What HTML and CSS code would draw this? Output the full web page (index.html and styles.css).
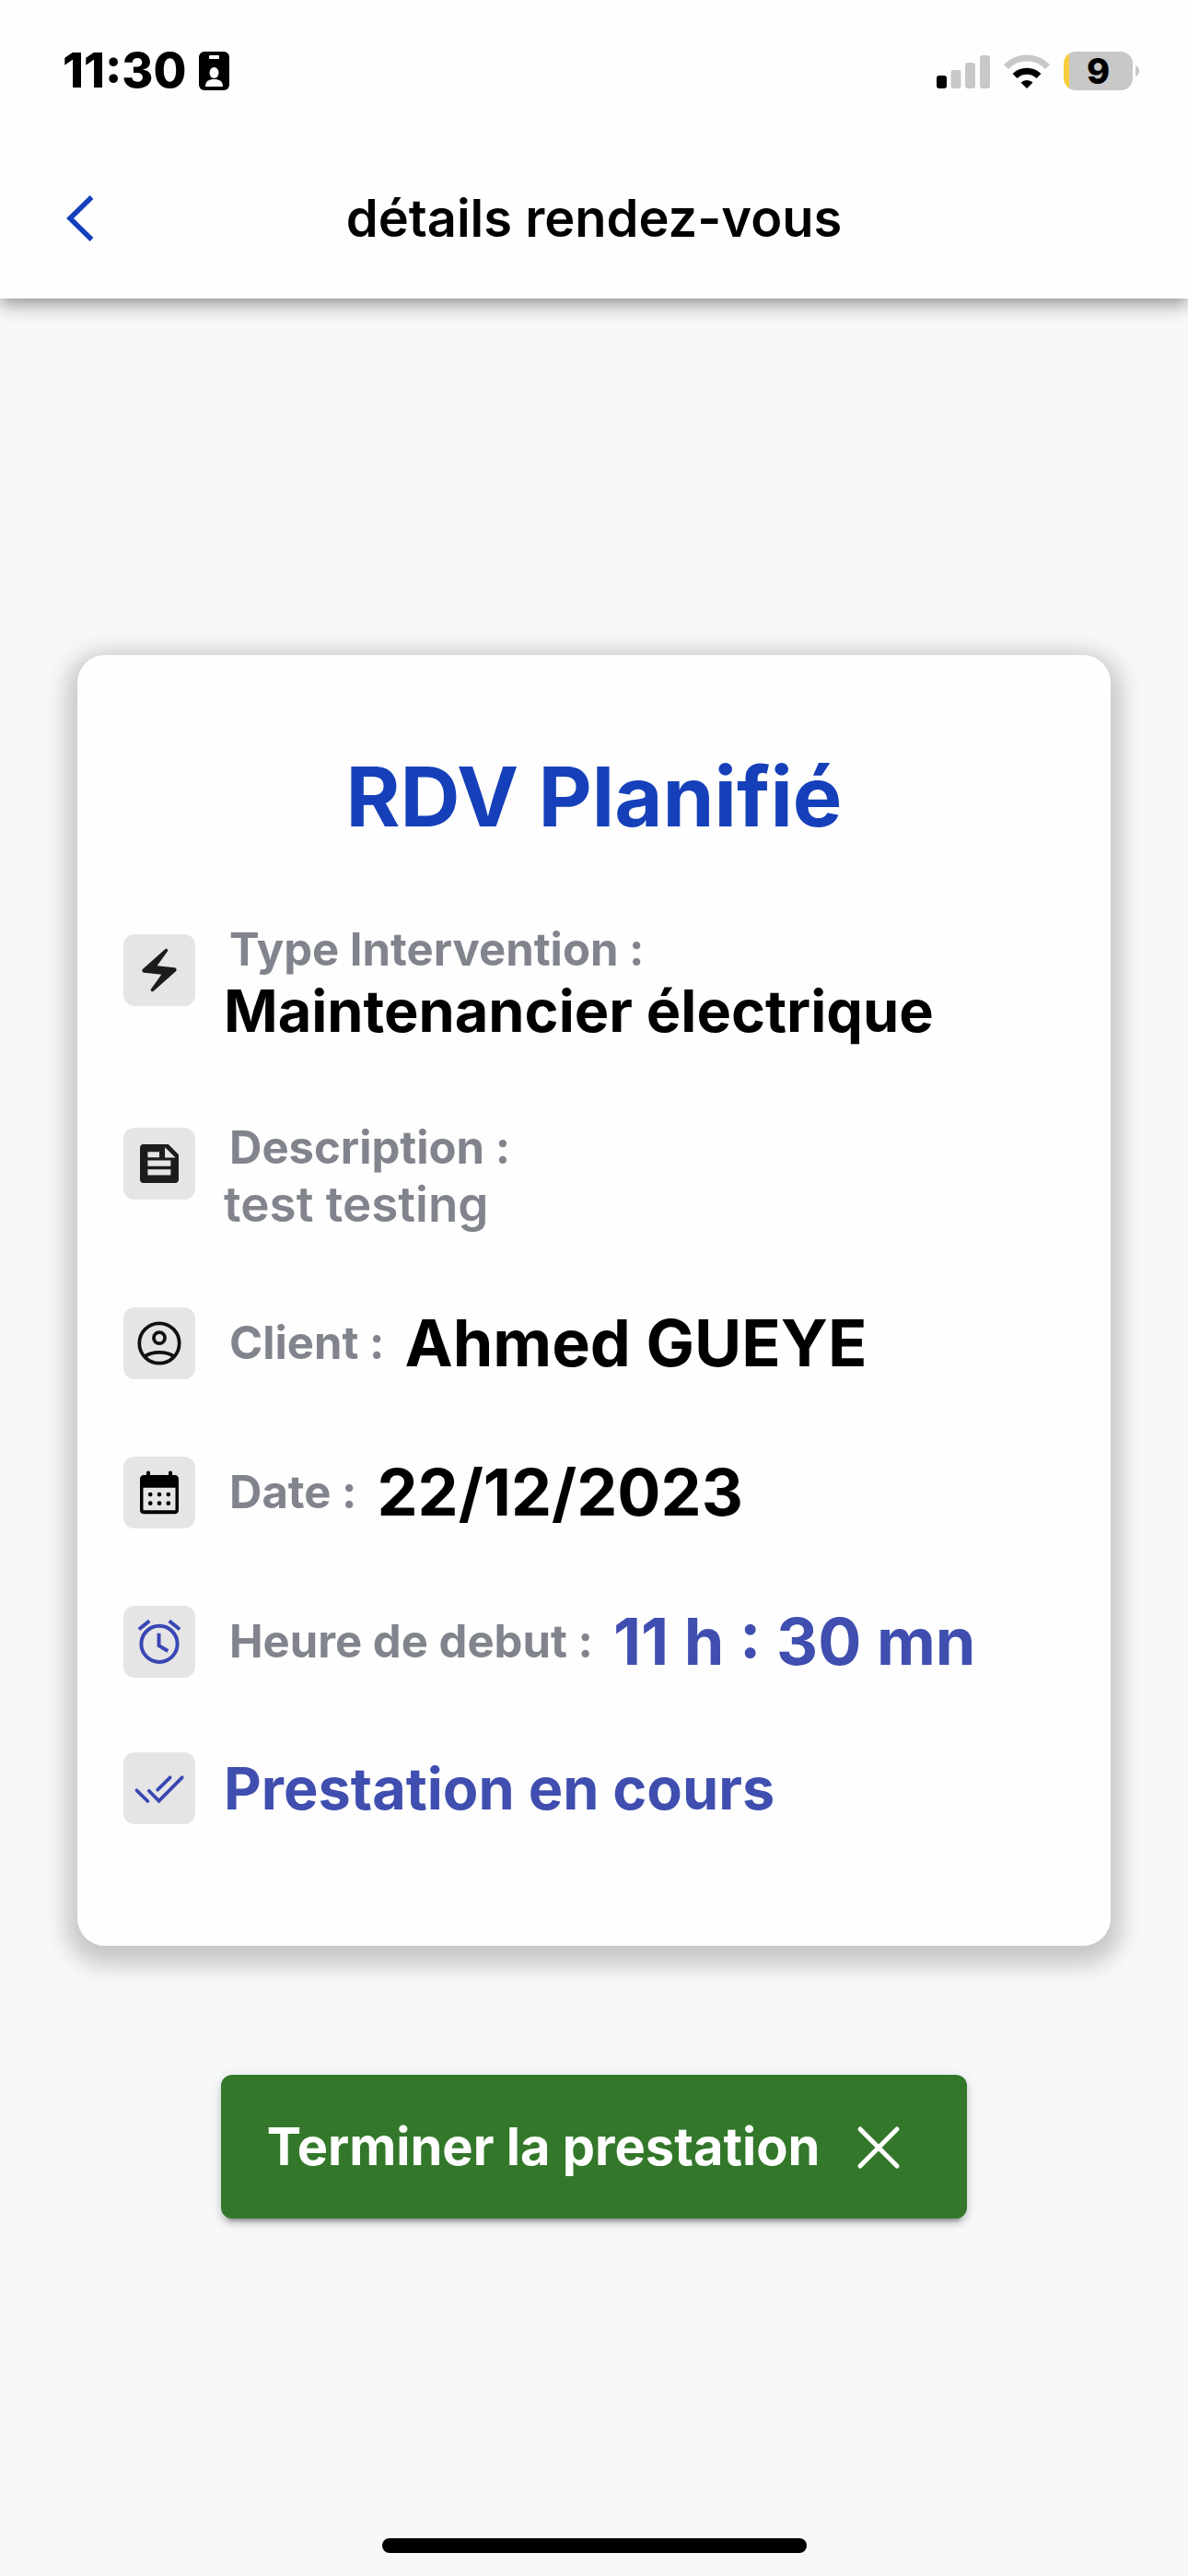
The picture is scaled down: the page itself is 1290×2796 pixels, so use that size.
FILE: index.html
```html
<!DOCTYPE html>
<html lang="fr">
<head>
<meta charset="utf-8">
<meta name="viewport" content="width=device-width, initial-scale=1">
<title>détails rendez-vous</title>
<link rel="stylesheet" href="styles.css">
</head>
<body>
<header class="app-bar">
  <div class="status">
    <div class="status-left">
      <span class="clock">11:30</span>
      <svg class="badge-icon" viewBox="0 0 33 42" aria-hidden="true">
        <rect width="33" height="42" rx="6"/>
        <rect x="11" y="4" width="11" height="4" rx="1" fill="#fff"/>
        <ellipse cx="16.500" cy="23" rx="5" ry="6" fill="#fff"/>
        <path d="M7 38c0-6 4-8 9.500-8s9.500 2 9.500 8z" fill="#fff"/>
      </svg>
    </div>
    <div class="status-right">
      <svg class="signal" viewBox="0 0 58 37" aria-hidden="true">
        <rect x="0" y="23" width="11" height="14" rx="3"/>
        <g fill="#c8c8c8"><rect x="15.500" y="17" width="11" height="20" rx="3"/><rect x="31" y="9" width="11" height="28" rx="3"/><rect x="47" y="1" width="11" height="36" rx="3"/></g>
      </svg>
      <svg class="wifi" viewBox="0 0 50 37" aria-hidden="true">
        <path d="M2.500 13.500A31.500 31.500 0 0 1 47.500 13.500" fill="none" stroke="#c8c8c8" stroke-width="7"/>
        <path d="M12 23.500A18.500 18.500 0 0 1 38 23.500" fill="none" stroke="#000" stroke-width="7"/>
        <path d="M18.500 30.500a9.500 9.500 0 0 1 13 0L25 37z"/>
      </svg>
      <span class="battery">9</span>
      <svg class="battery-cap" viewBox="0 0 5 12" aria-hidden="true"><path d="M0 0a6.500 6.500 0 0 1 0 12z" fill="#c8c8c8"/></svg>
    </div>
  </div>
  <div class="toolbar">
    <button class="back" type="button" aria-label="Retour">
      <svg viewBox="0 0 30 50" aria-hidden="true"><path d="M27.500 2 4 25l23.500 23" fill="none" stroke="#1440bc" stroke-width="5.500"/></svg>
    </button>
    <h1 class="screen-title">détails rendez-vous</h1>
  </div>
</header>

<main class="content">
  <section class="card">
    <h2 class="card-title">RDV Planifié</h2>
    <div class="rows">
      <div class="row row-first">
        <span class="tile tile-raised"><svg viewBox="0 0 24 24" fill="#1c1c1c"><path d="M14.690 2.210 4.330 11.490c-.64.58-.28 1.650.58 1.730L13 14l-4.850 6.760c-.22.31-.19.74.08 1.010.3.3.77.31 1.080.02l10.360-9.280c.64-.58.28-1.650-.58-1.730L11 10l4.850-6.760c.22-.31.19-.74-.08-1.010-.3-.3-.77-.31-1.080-.02z"/></svg></span>
        <div class="stack">
          <span class="label">Type Intervention :</span>
          <span class="value-md">Maintenancier électrique</span>
        </div>
      </div>
      <div class="row">
        <span class="tile tile-raised"><svg viewBox="0 0 24 24" fill="#1c1c1c"><path fill-rule="evenodd" d="M16.200 3H4.500C3.700 3 3 3.700 3 4.500v15c0 .8.7 1.500 1.500 1.500h15c.8 0 1.500-.7 1.500-1.500V7.800zM6.600 6.500H12v2.600H6.600zM17.300 17.400H6.600v-2.700h10.700zm0-4.200H6.600v-2.700h10.700zM14.600 9.200V4.400l4.900 4.800z"/></svg></span>
        <div class="stack">
          <span class="label">Description :</span>
          <span class="note">test testing</span>
        </div>
      </div>
      <div class="row">
        <span class="tile"><svg viewBox="0 0 24 24" fill="none" stroke="#111" stroke-width="1.600"><circle cx="12" cy="12" r="9.300"/><circle cx="12" cy="9.500" r="2.600"/><path d="M5 18.200c2-1.400 4.500-2 7-2s5 .6 7 2"/></svg></span>
        <div class="pair">
          <span class="label">Client :</span>
          <span class="value-lg">Ahmed GUEYE</span>
        </div>
      </div>
      <div class="row">
        <span class="tile"><svg viewBox="0 0 24 24"><path fill-rule="evenodd" d="M6 3.900V2.800a.8.8 0 0 1 1.700 0v1.100h8.600V2.800a.8.8 0 0 1 1.700 0v1.100h1.200c1 0 1.800.8 1.800 1.800v14.500c0 1-.8 1.800-1.800 1.800H4.800c-1 0-1.800-.8-1.800-1.800V5.700c0-1 .8-1.800 1.800-1.800zM4.500 9.700v10.500h15V9.700z"/><g><circle cx="7.800" cy="12.900" r="1"/><circle cx="12" cy="12.900" r="1"/><circle cx="16.200" cy="12.900" r="1"/><circle cx="7.800" cy="17" r="1"/><circle cx="12" cy="17" r="1"/><circle cx="16.200" cy="17" r="1"/></g></svg></span>
        <div class="pair">
          <span class="label">Date :</span>
          <span class="value-lg">22/12/2023</span>
        </div>
      </div>
      <div class="row">
        <span class="tile"><svg viewBox="0 0 24 24" fill="none" stroke="#3947b4" stroke-width="1.700"><circle cx="12" cy="13" r="8.400"/><path d="M11.800 8v5.800l4.200 2.500M2.500 6.200l4.900-3.900M16.600 2.300l4.900 3.900"/></svg></span>
        <div class="pair">
          <span class="label">Heure de debut :</span>
          <span class="value-lg accent">11 h : 30 mn</span>
        </div>
      </div>
      <div class="row">
        <span class="tile"><svg viewBox="0 0 24 24" fill="none" stroke="#3947b4" stroke-width="1.600" stroke-linecap="round"><path d="M1.500 13l5.100 5M7.200 13.200l4.600 4.700L22.600 7M11.200 12.700 17 7"/></svg></span>
        <span class="value-md accent">Prestation en cours</span>
      </div>
    </div>
  </section>

  <button class="finish" type="button">
    <span>Terminer la prestation</span>
    <svg viewBox="0 0 72 72" aria-hidden="true"><path d="M16 17l40 40M56 17 16 57" stroke="#fff" stroke-width="5" stroke-linecap="round"/></svg>
  </button>
</main>
<div class="home-indicator"></div>
</body>
</html>
```
FILE: styles.css
```css
* { box-sizing: border-box; }

body {
  margin: 0;
  min-height: 100vh;
  display: flex;
  flex-direction: column;
  background: #f7f8fa;
  color: #000;
  font-family: Inter, "Liberation Sans", sans-serif;
}

h1, h2 { margin: 0; }

svg { display: block; }

button {
  border: 0;
  font-family: inherit;
  cursor: pointer;
}

/* App bar */
.app-bar {
  height: 324px;
  background: #fefefe;
  box-shadow: 0 6px 12px -3px rgba(0, 0, 0, .2), 0 12px 15px rgba(0, 0, 0, .14), 0 3px 30px rgba(0, 0, 0, .12);
}

.status {
  display: flex;
  justify-content: space-between;
  align-items: center;
  height: 154px;
  padding: 0 52px 0 68px;
}

.status-left, .status-right {
  display: flex;
  align-items: center;
}

.status-left { gap: 14px; }

.clock {
  font-size: 52px;
  line-height: 58px;
  font-weight: 800;
}

.badge-icon { width: 33px; height: 42px; }
.signal { width: 58px; height: 37px; margin-right: 15px; }
.wifi { width: 50px; height: 37px; margin-right: 15px; }

.battery {
  width: 75px;
  height: 42px;
  border-radius: 13px;
  background: linear-gradient(to right, #f8cd3e 6px, #c8c8c8 6px);
  font-size: 38px;
  line-height: 42px;
  font-weight: 800;
  text-align: center;
}

.battery-cap { width: 5px; height: 12px; margin-left: 3px; }

.toolbar {
  display: grid;
  grid-template-columns: 112px 1fr 112px;
  align-items: center;
  height: 165px;
}

.back {
  display: flex;
  padding: 0;
  margin-left: 72px;
  background: none;
}

.back svg { width: 30px; height: 50px; }

.screen-title {
  font-size: 56px;
  line-height: 66px;
  font-weight: 600;
  text-align: center;
}

/* Appointment card */
.content {
  display: flex;
  flex-direction: column;
  align-items: center;
  gap: 140px;
  padding: 387px 84px 0;
}

.card {
  width: 100%;
  padding: 99px 50px 132px;
  border-radius: 30px;
  background: #fefefe;
  box-shadow: 0 9px 24px 12px rgba(0, 0, 0, .2);
}

.card-title {
  margin-bottom: 81px;
  color: #1640ba;
  font-size: 90px;
  line-height: 110px;
  font-weight: 700;
  text-align: center;
}

.rows {
  display: flex;
  flex-direction: column;
  gap: 78px;
}

.row {
  display: flex;
  align-items: center;
  gap: 31px;
}

.row-first { margin-bottom: 5px; }

.tile {
  display: flex;
  flex: none;
  align-items: center;
  justify-content: center;
  width: 78px;
  height: 78px;
  border-radius: 12px;
  background: #e5e5e5;
}

.tile-raised { margin-bottom: 28px; }

.tile svg { width: 56px; height: 56px; }

.stack {
  display: flex;
  flex-direction: column;
}

.pair {
  display: flex;
  align-items: center;
  gap: 22px;
}

.label {
  padding-left: 6px;
  color: #81848c;
  font-size: 49px;
  line-height: 60px;
  font-weight: 700;
}

.value-md {
  font-size: 63px;
  line-height: 72px;
  font-weight: 700;
}

.value-lg {
  font-size: 70px;
  line-height: 84px;
  font-weight: 700;
}

.note {
  color: #81848c;
  font-size: 53px;
  line-height: 62px;
  font-weight: 600;
}

.accent { color: #3f4eaf; }

/* Main action */
.finish {
  display: flex;
  align-items: center;
  gap: 28px;
  height: 156px;
  padding: 0 60px 0 50px;
  border-radius: 12px;
  background: #33782a;
  color: #fff;
  font-size: 56px;
  line-height: 68px;
  font-weight: 700;
  box-shadow: 0 9px 3px -6px rgba(0, 0, 0, .2), 0 6px 6px rgba(0, 0, 0, .14), 0 3px 15px rgba(0, 0, 0, .12);
}

.finish svg { width: 72px; height: 72px; }

.home-indicator {
  width: 461px;
  height: 16px;
  margin: auto auto 25px;
  border-radius: 8px;
  background: #000;
}
```
